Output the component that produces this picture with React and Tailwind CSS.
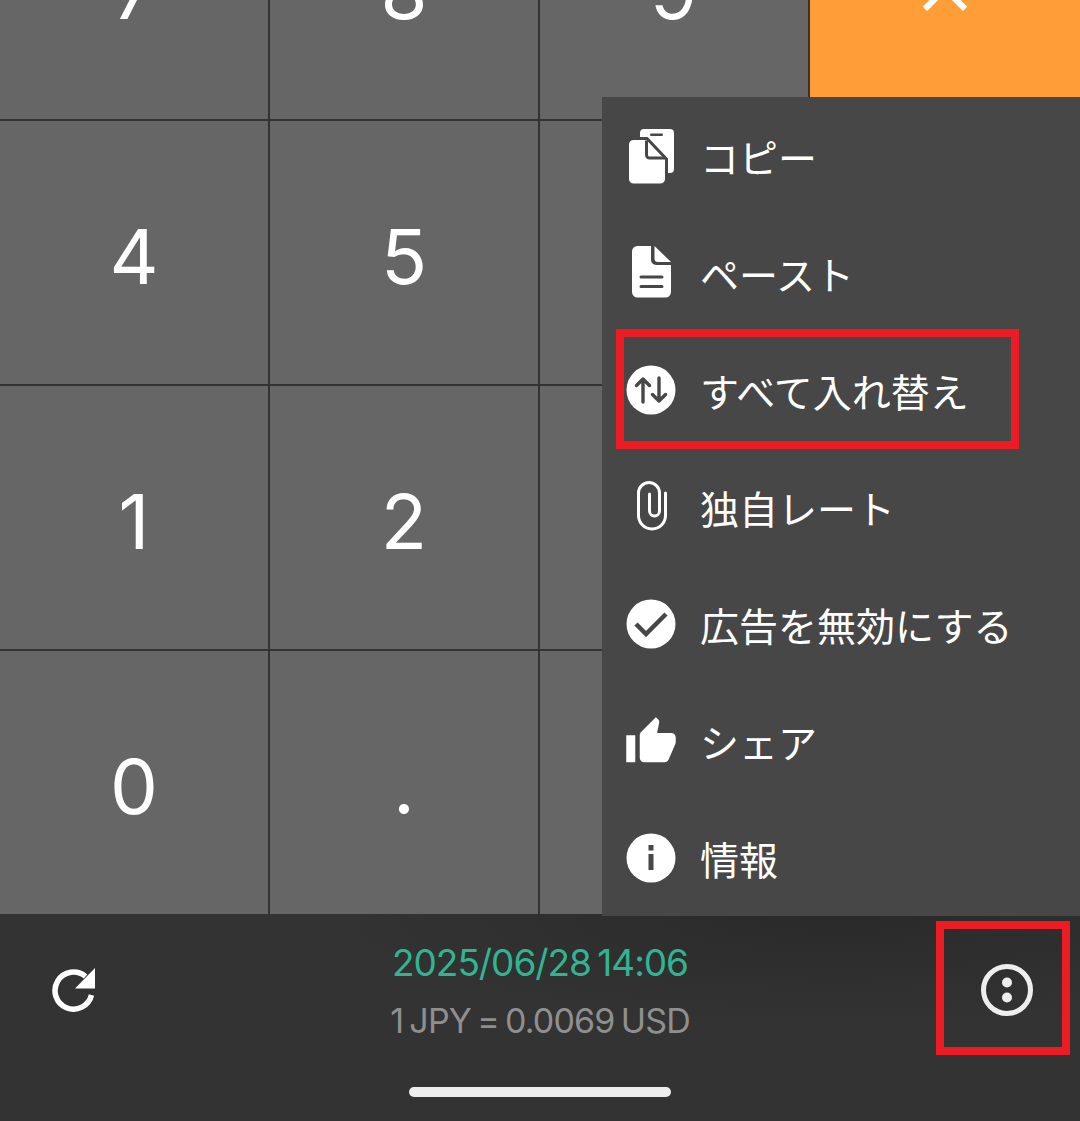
import { MdThumbUp } from 'react-icons/md';

const PANEL = '#474747';

function CopyIcon() {
  return (
    <svg viewBox="625 125 52 60" className="w-[52px] h-[60px]">
      <rect x="640" y="128" width="34" height="44" rx="4" fill="#fff" />
      <rect x="650" y="132.5" width="13" height="2.6" rx="1.3" fill={PANEL} />
      <path d="M634 137.5H647L666.5 158V178a6 6 0 0 1-6 6H633.500a6 6 0 0 1-6-6V143.500a6 6 0 0 1 6-6Z" fill="#fff" stroke={PANEL} strokeWidth="3" />
      <path d="M646.500 139.500V154a3 3 0 0 0 3 3H665" fill="none" stroke={PANEL} strokeWidth="3" />
    </svg>
  );
}

function PasteIcon() {
  return (
    <svg viewBox="625 245 52 60" className="w-[52px] h-[60px]">
      <path d="M651 248V262a5 5 0 0 0 5 5H671V294a5.500 5.500 0 0 1-5.500 5.500H637.500a5.500 5.500 0 0 1-5.500-5.500V253.500a5.500 5.500 0 0 1 5.500-5.500Z" fill="#fff" />
      <path d="M654.500 248L671 264H658a3.500 3.500 0 0 1-3.500-3.500Z" fill="#fff" />
      <path d="M641 279H662M641 288.500H662" stroke={PANEL} strokeWidth="3" strokeLinecap="round" />
    </svg>
  );
}

function SwapIcon() {
  return (
    <svg viewBox="0 0 50 50" className="w-[50px] h-[50px]">
      <circle cx="25" cy="25" r="24.500" fill="#fff" />
      <path d="M17 37V14M10.500 20.500L17 14L23.500 20.500M33 13V36M26.500 29.500L33 36L39.500 29.500" fill="none" stroke={PANEL} strokeWidth="3.400" strokeLinecap="round" strokeLinejoin="round" />
    </svg>
  );
}

function ClipIcon() {
  return (
    <svg viewBox="0 0 50 54" className="w-[50px] h-[54px]">
      <path d="M39.500 13V35.500a13.500 13.500 0 0 1-27 0V13a10.500 10.500 0 0 1 21 0V31a5 5 0 0 1-10 0V14" fill="none" stroke="#fff" strokeWidth="3" strokeLinecap="round" />
    </svg>
  );
}

function CheckIcon() {
  return (
    <svg viewBox="0 0 50 50" className="w-[50px] h-[50px]">
      <circle cx="25" cy="25" r="24.500" fill="#fff" />
      <path d="M10 25L20 35L40 15" fill="none" stroke={PANEL} strokeWidth="4.500" />
    </svg>
  );
}

function InfoIcon() {
  return (
    <svg viewBox="0 0 50 50" className="w-[50px] h-[50px]">
      <circle cx="25" cy="25" r="24.500" fill="#fff" />
      <rect x="22.500" y="12" width="5" height="5.500" fill={PANEL} />
      <rect x="22.500" y="21" width="5" height="16" fill={PANEL} />
    </svg>
  );
}

function RefreshIcon() {
  return (
    <svg viewBox="0 0 44 44" className="w-[44px] h-[44px]">
      <path d="M33.500 8.500A18.500 18.500 0 1 0 39.500 27" fill="none" stroke="#fff" strokeWidth="5.500" />
      <path d="M43 0V20.500H23Z" fill="#fff" />
    </svg>
  );
}

const menuItems = [
  { label: 'コピー', icon: <CopyIcon /> },
  { label: 'ペースト', icon: <PasteIcon /> },
  { label: 'すべて入れ替え', icon: <SwapIcon /> },
  { label: '独自レート', icon: <ClipIcon /> },
  { label: '広告を無効にする', icon: <CheckIcon /> },
  { label: 'シェア', icon: <span className="block pt-[2px]"><MdThumbUp size={54} color="#fff" /></span> },
  { label: '情報', icon: <InfoIcon /> },
];

const keys = ['7', '8', '9', '×', '4', '5', '6', '−', '1', '2', '3', '+', '0', '.', '', '='];

export default function App() {
  return (
    <div className="relative h-[1121px] w-[1080px] overflow-hidden bg-[#333333] flex flex-col font-['Inter','Noto_Sans_CJK_JP',sans-serif]">
      <div className="-mt-[144px] grid grid-cols-[268px_268px_268px_270px] auto-rows-[263px] gap-[2px]">
        {keys.map((k, i) => (
          <div
            key={i}
            className={`flex items-center justify-center text-white ${i % 4 === 3 ? 'bg-[#ff9d37] text-[100px] font-light pb-[14px]' : 'bg-[#666666] text-[76px] pt-[7px]'}`}
          >
            {k}
          </div>
        ))}
      </div>

      {/* bottom bar */}
      <div className="flex-1 grid grid-cols-[1fr_auto_1fr] bg-[radial-gradient(ellipse_520px_110px_at_840px_0px,#2a2a2a,#333333)]">
        <div className="pl-[52px] pt-[54px]">
          <RefreshIcon />
        </div>
        <div className="flex flex-col items-center pt-[26px]">
          <div className="text-[37px] leading-[46px] tracking-[-1.05px] [word-spacing:-3px] text-[#2fb592]">2025/06/28 14:06</div>
          <div className="mt-[13px] text-[34px] leading-[44px] tracking-[-0.85px] [word-spacing:-2.5px] text-[#8f8f8f]">1 JPY = 0.0069 USD</div>
          <div className="mt-[44px] h-[10px] w-[262px] rounded-full bg-[#eeeeee]" />
        </div>
        <div className="flex justify-end pr-[46px] pt-[49px]">
          <svg viewBox="0 0 54 54" className="w-[54px] h-[54px]">
            <circle cx="27" cy="27" r="23.500" fill="none" stroke="#eeeeee" strokeWidth="5" />
            <circle cx="27" cy="19.500" r="5" fill="#eeeeee" />
            <circle cx="27" cy="34.500" r="5" fill="#eeeeee" />
          </svg>
        </div>
      </div>

      {/* popup menu */}
      <div className="absolute left-[602px] top-[97px] w-[478px] bg-[#474747] text-white">
        {menuItems.map((item) => (
          <div key={item.label} className="flex h-[117px] items-center pl-[23px] gap-[23px]">
            <div className="flex w-[52px] justify-center">{item.icon}</div>
            <span className="pt-[1px] text-[39px] font-['Noto_Sans_CJK_JP',sans-serif]">{item.label}</span>
          </div>
        ))}
      </div>

      {/* red highlights */}
      <div className="absolute left-[616px] top-[329px] h-[120px] w-[403px] border-[8px] border-[#ed1c24]" />
      <div className="absolute left-[936px] top-[921px] h-[134px] w-[134px] border-[8px] border-[#ed1c24]" />
    </div>
  );
}
